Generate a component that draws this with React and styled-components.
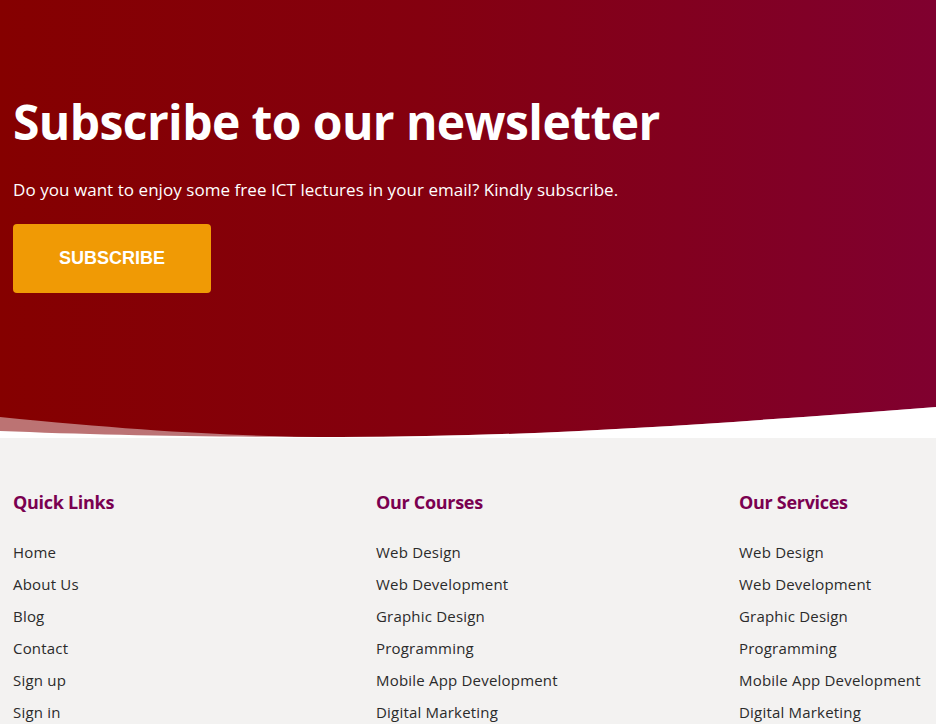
import React from "react";
import styled, { createGlobalStyle } from "styled-components";

const GlobalStyle = createGlobalStyle`
  html, body { margin: 0; padding: 0; }
  body { font-family: "Open Sans", "Noto Sans", sans-serif; background: #ffffff; }
  * { box-sizing: border-box; }
`;

const Hero = styled.section`
  position: relative;
  height: 438px;
  background: linear-gradient(to right, #850000 0%, #84000f 45%, #80002f 100%);
  padding: 88px 13px 0;
  display: flex;
  flex-direction: column;
  align-items: flex-start;
`;

const Title = styled.h1`
  margin: 0;
  color: #ffffff;
  font-size: 48px;
  font-weight: 700;
  line-height: 68px;
  letter-spacing: -0.6px;
`;

const Lead = styled.p`
  margin: 22px 0 0;
  color: #ffffff;
  font-size: 17px;
  line-height: 24px;
  letter-spacing: 0.05px;
`;

const SubscribeButton = styled.button`
  margin-top: 22px;
  width: 198px;
  height: 69px;
  border: none;
  border-radius: 4px;
  background: #f09a05;
  color: #ffffff;
  font-family: "Liberation Sans", Arial, sans-serif;
  font-weight: 700;
  font-size: 18px;
  cursor: pointer;
`;

const Wave = styled.svg`
  position: absolute;
  left: 0;
  bottom: 0;
  width: 100%;
  height: 40px;
  display: block;
`;

const Footer = styled.footer`
  background: #f3f2f1;
  padding: 52px 0 40px 13px;
`;

const Columns = styled.div`
  display: grid;
  grid-template-columns: 363px 363px 1fr;
`;

const Column = styled.div`
  display: flex;
  flex-direction: column;
  min-width: 0;
`;

const ColumnTitle = styled.h3`
  margin: 0 0 22px;
  color: #7a0050;
  font-size: 18px;
  font-weight: 700;
  line-height: 24px;
  letter-spacing: -0.3px;
`;

const LinkList = styled.ul`
  list-style: none;
  margin: 0;
  padding: 0;
  display: flex;
  flex-direction: column;
`;

const LinkItem = styled.li`
  height: 32px;
  display: flex;
  align-items: center;
  white-space: nowrap;
`;

const FooterLink = styled.a`
  color: #2b2b2b;
  font-size: 15px;
  text-decoration: none;
  letter-spacing: 0.2px;
`;

const columns = [
  {
    title: "Quick Links",
    links: ["Home", "About Us", "Blog", "Contact", "Sign up", "Sign in"],
  },
  {
    title: "Our Courses",
    links: [
      "Web Design",
      "Web Development",
      "Graphic Design",
      "Programming",
      "Mobile App Development",
      "Digital Marketing",
    ],
  },
  {
    title: "Our Services",
    links: [
      "Web Design",
      "Web Development",
      "Graphic Design",
      "Programming",
      "Mobile App Development",
      "Digital Marketing",
    ],
  },
];

export default function App() {
  return (
    <>
      <GlobalStyle />
      <Hero>
        <Title>Subscribe to our newsletter</Title>
        <Lead>Do you want to enjoy some free ICT lectures in your email? Kindly subscribe.</Lead>
        <SubscribeButton>SUBSCRIBE</SubscribeButton>
        <Wave viewBox="0 0 936 40" preserveAspectRatio="none">
          <path
            d="M0,19 C150,34 250,39 340,39 C560,39 760,22 936,9 L936,40 L0,40 Z"
            fill="#ffffff"
            opacity="0.45"
          />
          <path
            d="M0,33 C100,37 200,39 340,39 C560,39 760,22 936,9 L936,40 L0,40 Z"
            fill="#ffffff"
          />
        </Wave>
      </Hero>
      <Footer>
        <Columns>
          {columns.map((col) => (
            <Column key={col.title}>
              <ColumnTitle>{col.title}</ColumnTitle>
              <LinkList>
                {col.links.map((l) => (
                  <LinkItem key={l}>
                    <FooterLink href="#">{l}</FooterLink>
                  </LinkItem>
                ))}
              </LinkList>
            </Column>
          ))}
        </Columns>
      </Footer>
    </>
  );
}
